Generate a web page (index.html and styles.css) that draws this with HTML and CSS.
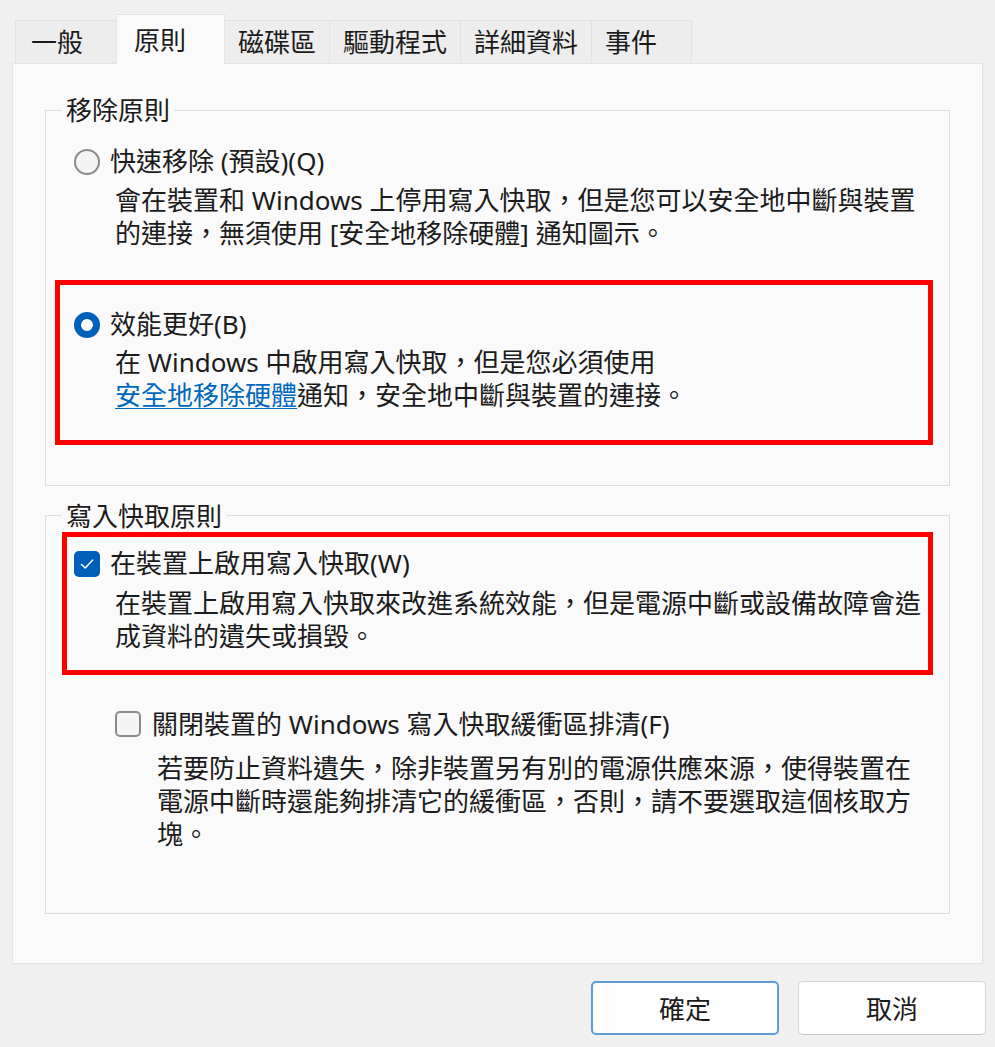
FILE: index.html
```html
<!DOCTYPE html>
<html lang="zh-TW">
<head>
    <meta charset="UTF-8">
    <meta name="viewport" content="width=device-width, initial-scale=1.0">
    <title>原則</title>
    <link rel="stylesheet" href="styles.css">
</head>
<body>

    <div class="dialog">
        <div class="tabs">
            <div class="tab first">一般</div>
            <div class="tab active">原則</div>
            <div class="tab">磁碟區</div>
            <div class="tab">驅動程式</div>
            <div class="tab">詳細資料</div>
            <div class="tab last">事件</div>
        </div>

        <div class="panel">
            <fieldset class="group group-remove">
                <legend>移除原則</legend>

                <div class="option option-quick">
                    <div class="option-title"><span class="radio"></span>快速移除 (預設)(Q)</div>
                    <p class="desc">會在裝置和 Windows 上停用寫入快取，但是您可以安全地中斷與裝置<br>的連接，無須使用 [安全地移除硬體] 通知圖示。</p>
                </div>

                <div class="option highlight highlight-perf">
                    <div class="option-title"><span class="radio checked"></span>效能更好(B)</div>
                    <p class="desc">在 Windows 中啟用寫入快取，但是您必須使用<br><a href="#" class="link">安全地移除硬體</a>通知，安全地中斷與裝置的連接。</p>
                </div>
            </fieldset>

            <fieldset class="group group-write">
                <legend>寫入快取原則</legend>

                <div class="option highlight highlight-cache">
                    <div class="option-title">
                        <span class="check checked">
                            <svg width="26" height="26" viewBox="0 0 26 26"><path d="M7.5 13.5 L11.2 17 L18.5 9.2" fill="none" stroke="#fff" stroke-width="1.6" stroke-linecap="round" stroke-linejoin="round"/></svg>
                        </span>在裝置上啟用寫入快取(W)
                    </div>
                    <p class="desc">在裝置上啟用寫入快取來改進系統效能，但是電源中斷或設備故障會造<br>成資料的遺失或損毀。</p>
                </div>

                <div class="option option-flush">
                    <div class="option-title"><span class="check"></span>關閉裝置的 Windows 寫入快取緩衝區排清(F)</div>
                    <p class="desc">若要防止資料遺失，除非裝置另有別的電源供應來源，使得裝置在<br>電源中斷時還能夠排清它的緩衝區，否則，請不要選取這個核取方<br>塊。</p>
                </div>
            </fieldset>
        </div>

        <div class="buttons">
            <button class="btn primary">確定</button>
            <button class="btn">取消</button>
        </div>
    </div>

</body>
</html>
```

FILE: styles.css
```css
/* General */
body {
    margin: 0;
    background: #f0f0f0;
    color: #1b1b1b;
    font-family: "Noto Sans", "Noto Sans CJK TC", sans-serif;
    font-size: 26px;
}

.dialog {
    padding-top: 14px;
}

/* Tabs */
.tabs {
    display: flex;
    align-items: flex-end;
    height: 49px;
    margin-left: 15px;
}

.tab {
    box-sizing: border-box;
    height: 43px;
    min-width: 101px;
    padding: 0 13px;
    line-height: 42px;
    background: #ededed;
    border: 1px solid #e2e2e2;
    border-bottom: none;
    border-right: none;
    white-space: nowrap;
}

.tab.first {
    padding-left: 15px;
}

.tab.last {
    border-right: 1px solid #e2e2e2;
}

.tab.active {
    position: relative;
    z-index: 1;
    height: 50px;
    min-width: 109px;
    margin-bottom: -1px;
    padding-left: 17px;
    line-height: 50px;
    background: #fafafa;
    border: 1px solid #e3e3e3;
    border-bottom: none;
}

.tab.active + .tab {
    border-left: none;
}

/* Panel */
.panel {
    margin: 0 12px;
    padding: 31px 0 49px;
    background: #fafafa;
    border: 1px solid #e3e3e3;
    box-shadow: 1px 1px 0 #ececec;
}

.group {
    margin: 0 32px;
    padding: 20px 0 40px 28px;
    border: 1px solid #dcdcdc;
    box-shadow: 1px 1px 0 #fff;
}

.group legend {
    margin-left: -12px;
    padding: 0 4px;
    line-height: 30px;
}

.group-write {
    margin-top: 15px;
    padding-top: 0;
    padding-bottom: 62px;
}

/* Options */
.option-title {
    display: flex;
    align-items: center;
    gap: 10px;
    line-height: 33px;
    white-space: nowrap;
}

.desc {
    margin: 5px 0 0;
    padding-left: 41px;
    line-height: 33px;
    white-space: nowrap;
}

.option-quick .desc {
    margin-top: 6px;
}

.highlight {
    border: 5px solid #ff0000;
}

.highlight-perf {
    margin: 29.5px 16px 0 -19px;
    padding: 23.5px 0 27.5px 14px;
}

.highlight-cache {
    margin: 1px 16px 0 -12px;
    padding: 10.5px 0 16.5px 7px;
}

.highlight-cache .desc {
    margin-top: 7px;
}

.option-flush {
    margin: 33px 0 0 41px;
}

.option-flush .option-title {
    gap: 11px;
}

.option-flush .desc {
    margin-top: 11px;
    padding-left: 42px;
}

.link {
    color: #0067c0;
    text-decoration: underline;
    text-underline-offset: 3px;
    text-decoration-thickness: 1px;
}

/* Radio and check boxes */
.radio {
    box-sizing: border-box;
    flex: none;
    width: 26px;
    height: 26px;
    border-radius: 50%;
    border: 2px solid #8a8a8a;
    background: #f4f4f4;
}

.radio.checked {
    border: 7px solid #005fb8;
    background: #ffffff;
}

.check {
    box-sizing: border-box;
    flex: none;
    display: flex;
    width: 26px;
    height: 26px;
    border-radius: 5px;
    border: 2px solid #8a8a8a;
    background: #f4f4f4;
}

.check.checked {
    border: none;
    background: #005fb8;
}

/* Buttons */
.buttons {
    display: flex;
    justify-content: flex-end;
    gap: 19px;
    margin-top: 17px;
    padding-right: 9px;
}

.btn {
    box-sizing: border-box;
    width: 188px;
    height: 54px;
    font-family: inherit;
    font-size: 26px;
    color: #1b1b1b;
    background: #fdfdfd;
    border: 1px solid #d6d6d6;
    border-bottom-color: #c4c4c4;
    border-radius: 5px;
}

.btn.primary {
    border: 2px solid #5e9cd6;
}
```
